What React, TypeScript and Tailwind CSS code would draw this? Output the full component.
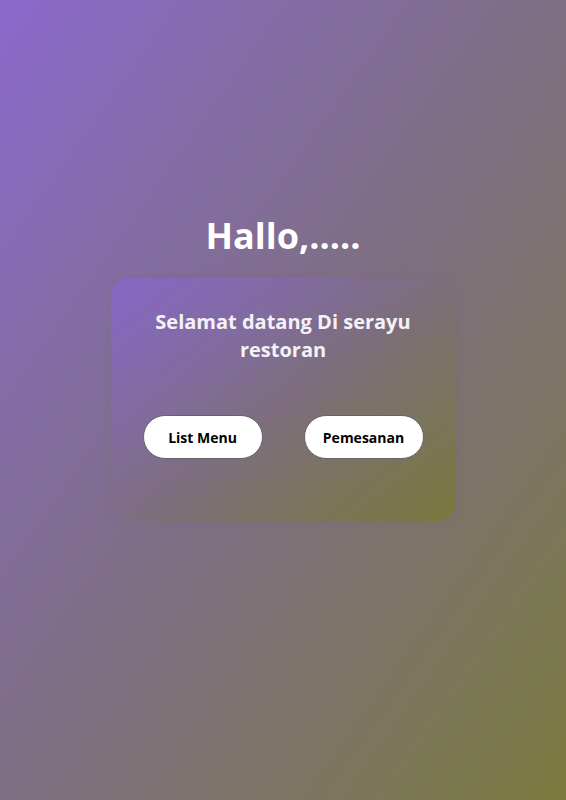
import React from 'react';

const Welcome: React.FC = () => {
  return (
    <div
      className="h-[800px] w-full flex flex-col items-center pt-[216px] bg-gradient-to-br from-[#8b68cc] via-[#7e6e82] to-[#7a7a3c]"
      style={{ fontFamily: '"Open Sans", "Noto Sans", sans-serif' }}
    >
      <h1 className="text-[36px] leading-[40px] font-bold text-white">Hallo,.....</h1>

      {/* Card */}
      <div className="mt-[22px] w-[344px] h-[243px] rounded-[18px] bg-gradient-to-br from-[#8766c8]/90 via-[#7c6c78]/40 to-[#7a783c]/95 shadow-[0_0_6px_rgba(120,110,120,0.6)] flex flex-col items-center pt-[30px]">
        <p className="text-[#f4f2f6] text-[20px] leading-[28px] font-bold text-center w-[290px]">
          Selamat datang Di serayu restoran
        </p>
        <div className="mt-[51px] flex gap-[41px]">
          <button className="w-[120px] h-[44px] rounded-full bg-white border border-[#6b5f6b] text-black text-[14px] font-bold">
            List Menu
          </button>
          <button className="w-[120px] h-[44px] rounded-full bg-white border border-[#6b5f6b] text-black text-[14px] font-bold">
            Pemesanan
          </button>
        </div>
      </div>
    </div>
  );
};

export default function App() {
  return <Welcome />;
}
